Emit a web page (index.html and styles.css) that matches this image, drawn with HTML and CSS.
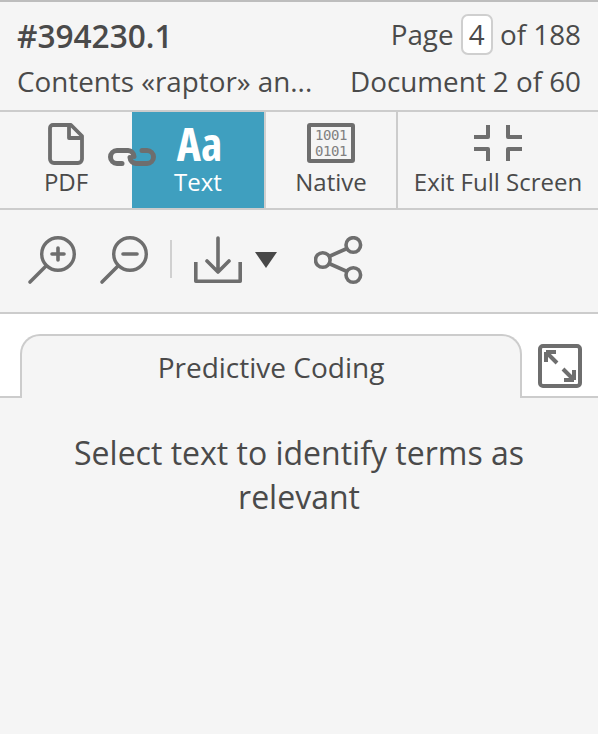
FILE: index.html
```html
<!DOCTYPE html>
<html lang="en">
<head>
<meta charset="utf-8">
<title>Document viewer</title>
<link rel="stylesheet" href="styles.css">
</head>
<body>
<header class="info">
  <div class="info-row">
    <strong class="doc-id">#394230.1</strong>
    <span class="pager">Page <span class="page-box">4</span> of 188</span>
  </div>
  <div class="info-row second">
    <span class="doc-name">Contents «raptor» an...</span>
    <span>Document 2 of 60</span>
  </div>
</header>
<nav class="modes">
  <div class="mode mode-pdf">
    <svg class="mode-icon" width="36" height="42" viewBox="0 0 36 42"><path d="M5 2h18l11 11v23a4 4 0 0 1-4 4H6a4 4 0 0 1-4-4V5a3 3 0 0 1 3-3zM21 2v13h13" fill="none" stroke="#6e6e6e" stroke-width="3.8" stroke-linejoin="round"/></svg>
    <span>PDF</span>
  </div>
  <div class="mode mode-text active">
    <span class="aa">Aa</span>
    <span>Text</span>
  </div>
  <div class="mode mode-native">
    <div class="binary"><span>1001</span><span>0101</span></div>
    <span>Native</span>
  </div>
  <div class="mode mode-exit">
    <svg class="mode-icon" width="48" height="36" viewBox="0 0 48 36"><path d="M0 12h14V0M48 12H34V0M0 24h14v12M48 24H34v12" fill="none" stroke="#6e6e6e" stroke-width="4" stroke-linejoin="round"/></svg>
    <span>Exit Full Screen</span>
  </div>
  <svg class="link" width="50" height="22" viewBox="0 0 50 22"><path d="M15 17.500H10a6.500 6.500 0 0 1 0-13H21a6.500 6.500 0 0 1 6 6M35 4.500H40a6.500 6.500 0 0 1 0 13H29a6.500 6.500 0 0 1-6-6" fill="none" stroke="#6e6e6e" stroke-width="5" stroke-linecap="round"/></svg>
</nav>
<section class="tools">
  <svg class="tool zoom-in" width="50" height="50" viewBox="0 0 50 50"><circle cx="31" cy="18" r="16.300" fill="none" stroke="#6e6e6e" stroke-width="3.400"/><path d="M19 30 3 46" stroke="#6e6e6e" stroke-width="3.600" stroke-linecap="round"/><path d="M25 18h12M31 12v12" stroke="#6e6e6e" stroke-width="3.600" stroke-linecap="round"/></svg>
  <svg class="tool zoom-out" width="50" height="50" viewBox="0 0 50 50"><circle cx="31" cy="18" r="16.300" fill="none" stroke="#6e6e6e" stroke-width="3.400"/><path d="M19 30 3 46" stroke="#6e6e6e" stroke-width="3.600" stroke-linecap="round"/><path d="M24 18h14" stroke="#6e6e6e" stroke-width="3.600" stroke-linecap="round"/></svg>
  <span class="divider"></span>
  <svg class="tool download" width="50" height="50" viewBox="0 0 50 50"><path d="M1.800 26v19.300h44.400V26" fill="none" stroke="#6e6e6e" stroke-width="3.600" stroke-linejoin="round"/><path d="M24 2v34M13 25 24 36 35 25" fill="none" stroke="#6e6e6e" stroke-width="3.600" stroke-linecap="round" stroke-linejoin="round"/></svg>
  <span class="caret"></span>
  <svg class="tool share" width="50" height="50" viewBox="0 0 50 50"><circle cx="39.300" cy="9" r="7.300" fill="none" stroke="#6e6e6e" stroke-width="3.600"/><circle cx="8.800" cy="24" r="7.300" fill="none" stroke="#6e6e6e" stroke-width="3.600"/><circle cx="39.300" cy="39" r="7.300" fill="none" stroke="#6e6e6e" stroke-width="3.600"/><path d="M15 20.500 33 12.500M15 27.500 33 35.500" stroke="#6e6e6e" stroke-width="3.600"/></svg>
</section>
<section class="tabs">
  <div class="tab">Predictive Coding</div>
  <div class="tab-rest">
    <svg width="44" height="44" viewBox="0 0 44 44"><rect x="2" y="2" width="40" height="40" rx="3" fill="none" stroke="#6e6e6e" stroke-width="4"/><path d="M8 8h10M8 8v10M8 8l11 11M36 36H26M36 36V26M36 36 25 25" fill="none" stroke="#6e6e6e" stroke-width="4"/></svg>
  </div>
</section>
<main class="panel">
  <p>Select text to identify terms as relevant</p>
</main>
</body>
</html>
```
FILE: styles.css
```css
* { box-sizing: border-box; }
html, body { height: 100%; }
body {
  margin: 0;
  display: flex;
  flex-direction: column;
  background: #f5f5f5;
  color: #4a4a4a;
  font-family: "Open Sans", sans-serif;
  font-size: 27.8px;
  overflow: hidden;
}
.info {
  height: 112px;
  padding: 13px 17px 0 17px;
  border-top: 2px solid #bdbdbd;
  border-bottom: 2px solid #cccccc;
}
.info-row {
  display: flex;
  justify-content: space-between;
  align-items: center;
  height: 38px;
}
.second { margin-top: 13px; height: 30px; }
.doc-id { margin-top: 3px; font-size: 31.6px; font-weight: 600; }
.page-box {
  display: inline-block;
  width: 32px;
  height: 41px;
  line-height: 37px;
  text-align: center;
  background: #fff;
  border: 2px solid #cfcfcf;
  border-radius: 7px;
}
.modes {
  position: relative;
  display: flex;
  height: 98px;
  border-bottom: 2px solid #cccccc;
}
.mode {
  display: flex;
  flex-direction: column;
  align-items: center;
  font-size: 24px;
  line-height: 30px;
}
.mode-pdf { width: 132px; padding-top: 11px; }
.mode-pdf span { margin-top: 2px; }
.mode-text { width: 134px; color: #fff; background: #3f9fbf; border-right: 2px solid #cfcfcf; }
.mode-native { width: 132px; padding-top: 11px; border-right: 2px solid #cccccc; }
.mode-exit { flex: 1; padding-top: 13px; }
.mode-exit span { margin-top: 6px; }
.aa {
  height: 46px;
  margin-top: 9px;
  padding-left: 3px;
  font-size: 46px;
  line-height: 45px;
  font-weight: 700;
  font-stretch: 75%;
}
.binary {
  display: flex;
  flex-direction: column;
  justify-content: center;
  width: 48px;
  height: 40px;
  margin-bottom: 4px;
  border: 4px solid #6e6e6e;
  border-radius: 3px;
  color: #808080;
  font-family: "DejaVu Sans Mono", monospace;
  font-size: 14px;
  letter-spacing: -0.4px;
  line-height: 16px;
  text-align: center;
}
.link { position: absolute; left: 107px; top: 34px; }
.tools {
  display: flex;
  align-items: flex-start;
  height: 104px;
  padding: 26px 0 0 27px;
  border-bottom: 2px solid #cccccc;
}
.zoom-out { margin-left: 22px; }
.divider { width: 2px; height: 38px; margin: 4px 22px 0 21px; background: #d0d0d0; }
.caret {
  width: 0;
  height: 0;
  margin: 16px 0 0 11px;
  border-left: 11px solid transparent;
  border-right: 11px solid transparent;
  border-top: 16px solid #484848;
}
.share { margin-left: 37px; }
.tabs {
  display: flex;
  height: 84px;
  padding: 20px 0 0 20px;
  background: #fff;
  border-bottom: 2px solid #cccccc;
}
.tab {
  width: 502px;
  height: 64px;
  margin-bottom: -2px;
  padding-top: 14px;
  text-align: center;
  font-size: 28px;
  line-height: 34px;
  background: #f5f5f5;
  border: 2px solid #cccccc;
  border-bottom: none;
  border-radius: 20px 20px 0 0;
}
.tab-rest { padding: 10px 0 0 16px; }
.panel { flex: 1; padding: 33px 40px 0; }
.panel p { margin: 0; text-align: center; font-size: 32px; line-height: 44px; }
```
